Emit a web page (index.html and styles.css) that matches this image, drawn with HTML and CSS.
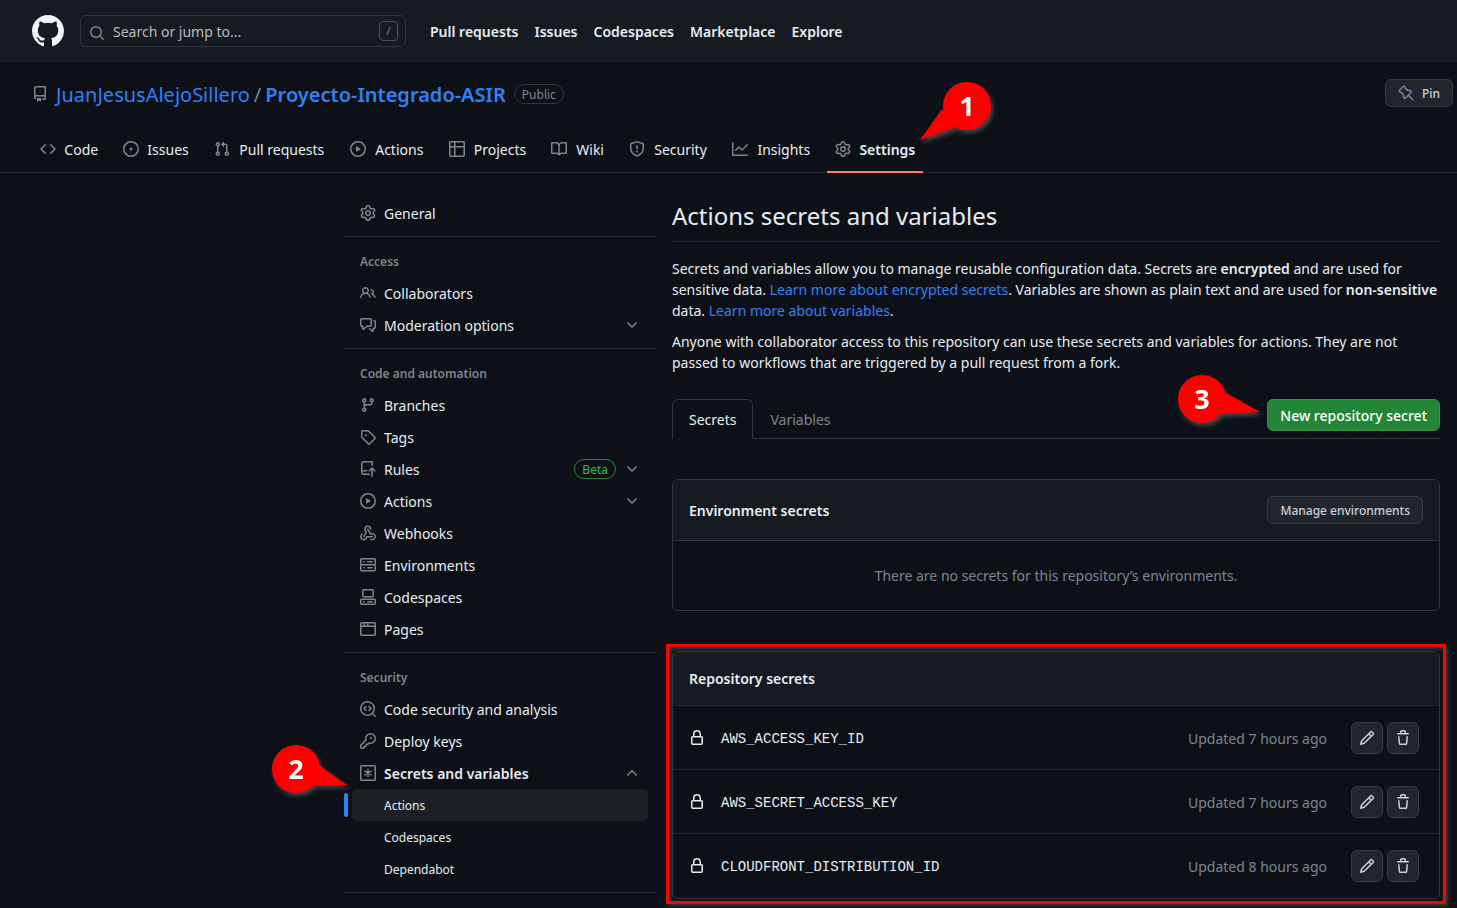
FILE: index.html
```html
<!DOCTYPE html>
<html lang="en">
<head>
<meta charset="utf-8">
<meta name="viewport" content="width=device-width, initial-scale=1">
<title>Actions secrets and variables</title>
<link rel="stylesheet" href="styles.css">
</head>
<body>
<svg class="sprite" aria-hidden="true">
  <symbol id="mark" viewBox="0 0 16 16"><path d="M8 0c4.42 0 8 3.58 8 8a8.013 8.013 0 0 1-5.45 7.59c-.4.08-.55-.17-.55-.38 0-.27.01-1.13.01-2.2 0-.75-.25-1.23-.54-1.48 1.78-.2 3.65-.88 3.65-3.95 0-.88-.31-1.59-.82-2.15.08-.2.36-1.02-.08-2.12 0 0-.67-.22-2.2.82-.64-.18-1.32-.27-2-.27-.68 0-1.36.09-2 .27-1.53-1.03-2.2-.82-2.2-.82-.44 1.1-.16 1.92-.08 2.12-.51.56-.82 1.28-.82 2.15 0 3.06 1.86 3.75 3.64 3.95-.23.2-.44.55-.51 1.07-.46.21-1.61.55-2.33-.66-.15-.24-.6-.83-1.23-.82-.67.01-.27.38.01.53.34.19.73.9.82 1.13.16.45.68 1.31 2.69.94 0 .67.01 1.3.01 1.49 0 .21-.15.45-.55.38A7.995 7.995 0 0 1 0 8c0-4.42 3.58-8 8-8Z"/></symbol>
  <symbol id="search" viewBox="0 0 16 16"><path d="M10.68 11.74a6 6 0 0 1-7.922-8.982 6 6 0 0 1 8.982 7.922l3.04 3.04a.749.749 0 0 1-.326 1.275.749.749 0 0 1-.734-.215ZM11.5 7a4.499 4.499 0 1 0-8.997 0A4.499 4.499 0 0 0 11.5 7Z"/></symbol>
  <symbol id="repo" viewBox="0 0 16 16"><path d="M2 2.5A2.5 2.5 0 0 1 4.5 0h8.75a.75.75 0 0 1 .75.75v12.5a.75.75 0 0 1-.75.75h-2.5a.75.75 0 0 1 0-1.5h1.75v-2h-8a1 1 0 0 0-.714 1.7.75.75 0 1 1-1.072 1.05A2.495 2.495 0 0 1 2 11.5Zm10.5-1h-8a1 1 0 0 0-1 1v6.708A2.486 2.486 0 0 1 4.5 9h8ZM5 12.25a.25.25 0 0 1 .25-.25h3.5a.25.25 0 0 1 .25.25v3.25a.25.25 0 0 1-.4.2l-1.45-1.087a.249.249 0 0 0-.3 0L5.4 15.7a.25.25 0 0 1-.4-.2Z"/></symbol>
  <symbol id="pin" viewBox="0 0 16 16"><path d="m11.294.984 3.722 3.722a1.75 1.75 0 0 1-.504 2.826l-1.327.613a3.089 3.089 0 0 0-1.707 2.084l-.584 2.454c-.317 1.332-1.972 1.8-2.94.832L5.75 11.311 1.78 15.28a.749.749 0 1 1-1.06-1.06l3.969-3.97-2.204-2.204c-.968-.968-.5-2.623.832-2.94l2.454-.584a3.08 3.08 0 0 0 2.084-1.707l.613-1.327a1.75 1.75 0 0 1 2.826-.504ZM6.283 9.723l2.732 2.731a.25.25 0 0 0 .42-.119l.584-2.454a4.586 4.586 0 0 1 2.537-3.098l1.328-.613a.25.25 0 0 0 .072-.404l-3.722-3.722a.25.25 0 0 0-.404.072l-.613 1.328a4.584 4.584 0 0 1-3.098 2.537l-2.454.584a.25.25 0 0 0-.119.42l2.731 2.732Z" transform="matrix(-1 0 0 1 16 0)"/></symbol>
  <symbol id="code" viewBox="0 0 16 16"><path d="m11.28 3.22 4.25 4.25a.75.75 0 0 1 0 1.06l-4.25 4.25a.749.749 0 0 1-1.275-.326.749.749 0 0 1 .215-.734L13.94 8l-3.72-3.72a.749.749 0 0 1 .326-1.275.749.749 0 0 1 .734.215Zm-6.56 0a.751.751 0 0 1 1.042.018.751.751 0 0 1 .018 1.042L2.06 8l3.72 3.72a.749.749 0 0 1-.326 1.275.749.749 0 0 1-.734-.215L.47 8.53a.75.75 0 0 1 0-1.06Z"/></symbol>
  <symbol id="issue" viewBox="0 0 16 16"><path d="M8 9.5a1.5 1.5 0 1 0 0-3 1.5 1.5 0 0 0 0 3Z"/><path d="M8 0a8 8 0 1 1 0 16A8 8 0 0 1 8 0ZM1.5 8a6.5 6.5 0 1 0 13 0 6.5 6.5 0 0 0-13 0Z"/></symbol>
  <symbol id="pull" viewBox="0 0 16 16"><path d="M1.5 3.25a2.25 2.25 0 1 1 3 2.122v5.256a2.251 2.251 0 1 1-1.5 0V5.372A2.25 2.25 0 0 1 1.5 3.25Zm5.677-.177L9.573.677A.25.25 0 0 1 10 .854V2.5h1A2.5 2.5 0 0 1 13.5 5v5.628a2.251 2.251 0 1 1-1.5 0V5a1 1 0 0 0-1-1h-1v1.646a.25.25 0 0 1-.427.177L7.177 3.427a.25.25 0 0 1 0-.354ZM3.75 2.5a.75.75 0 1 0 0 1.5.75.75 0 0 0 0-1.5Zm0 9.5a.75.75 0 1 0 0 1.5.75.75 0 0 0 0-1.5Zm8.25.75a.75.75 0 1 0 1.5 0 .75.75 0 0 0-1.5 0Z"/></symbol>
  <symbol id="play" viewBox="0 0 16 16"><path d="M8 0a8 8 0 1 1 0 16A8 8 0 0 1 8 0ZM1.5 8a6.5 6.5 0 1 0 13 0 6.5 6.5 0 0 0-13 0Zm4.879-2.773 4.264 2.559a.25.25 0 0 1 0 .428l-4.264 2.559A.25.25 0 0 1 6 10.559V5.442a.25.25 0 0 1 .379-.215Z"/></symbol>
  <symbol id="table" viewBox="0 0 16 16"><path d="M0 1.75C0 .784.784 0 1.75 0h12.5C15.216 0 16 .784 16 1.75v12.5A1.75 1.75 0 0 1 14.25 16H1.75A1.75 1.75 0 0 1 0 14.25ZM6.5 6.5v8h7.75a.25.25 0 0 0 .25-.25V6.5Zm8-1.5V1.75a.25.25 0 0 0-.25-.25H6.5V5Zm-13 1.5v7.75c0 .138.112.25.25.25H5v-8ZM5 5V1.5H1.75a.25.25 0 0 0-.25.25V5Z"/></symbol>
  <symbol id="book" viewBox="0 0 16 16"><path d="M0 1.75A.75.75 0 0 1 .75 1h4.253c1.227 0 2.317.59 3 1.501A3.743 3.743 0 0 1 11.006 1h4.245a.75.75 0 0 1 .75.75v10.5a.75.75 0 0 1-.75.75h-4.507a2.25 2.25 0 0 0-1.591.659l-.622.621a.75.75 0 0 1-1.06 0l-.622-.621A2.25 2.25 0 0 0 5.258 13H.75a.75.75 0 0 1-.75-.75Zm7.251 10.324.004-5.073-.002-2.253A2.25 2.25 0 0 0 5.003 2.5H1.5v9h3.757a3.75 3.75 0 0 1 1.994.574ZM8.755 4.75l-.004 7.322a3.752 3.752 0 0 1 1.992-.572H14.5v-9h-3.495a2.25 2.25 0 0 0-2.25 2.25Z"/></symbol>
  <symbol id="shield" viewBox="0 0 16 16"><path d="M7.467.133a1.748 1.748 0 0 1 1.066 0l5.25 1.68A1.75 1.75 0 0 1 15 3.48V7c0 1.566-.32 3.182-1.303 4.682-.983 1.498-2.585 2.813-5.032 3.855a1.697 1.697 0 0 1-1.33 0c-2.447-1.042-4.049-2.357-5.032-3.855C1.32 10.182 1 8.566 1 7V3.48a1.75 1.75 0 0 1 1.217-1.667Zm.61 1.429a.25.25 0 0 0-.153 0l-5.25 1.68a.25.25 0 0 0-.174.238V7c0 1.358.275 2.666 1.057 3.86.784 1.194 2.121 2.34 4.366 3.297a.196.196 0 0 0 .154 0c2.245-.956 3.582-2.104 4.366-3.298C13.225 9.666 13.5 8.36 13.5 7V3.48a.251.251 0 0 0-.174-.237ZM8.75 4.75v3a.75.75 0 0 1-1.5 0v-3a.75.75 0 0 1 1.5 0ZM9 10.5a1 1 0 1 1-2 0 1 1 0 0 1 2 0Z"/></symbol>
  <symbol id="graph" viewBox="0 0 16 16"><path d="M1.5 1.75V13.5h13.75a.75.75 0 0 1 0 1.5H.75a.75.75 0 0 1-.75-.75V1.75a.75.75 0 0 1 1.5 0Zm14.28 2.53-5.25 5.25a.75.75 0 0 1-1.06 0L7 7.06 4.28 9.78a.751.751 0 0 1-1.042-.018.751.751 0 0 1-.018-1.042l3.25-3.25a.75.75 0 0 1 1.06 0L10 7.94l4.72-4.72a.751.751 0 0 1 1.042.018.751.751 0 0 1 .018 1.042Z"/></symbol>
  <symbol id="gear" viewBox="0 0 16 16"><path d="M8 0a8.2 8.2 0 0 1 .701.031C9.444.095 9.99.645 10.16 1.29l.288 1.107c.018.066.079.158.212.224.231.114.454.243.668.386.123.082.233.09.299.071l1.103-.303c.644-.176 1.392.021 1.82.63.27.385.506.792.704 1.218.315.675.111 1.422-.364 1.891l-.814.806c-.049.048-.098.147-.088.294.016.257.016.515 0 .772-.01.147.038.246.088.294l.814.806c.475.469.679 1.216.364 1.891a7.977 7.977 0 0 1-.704 1.217c-.428.61-1.176.807-1.82.63l-1.102-.302c-.067-.019-.177-.011-.3.071a5.909 5.909 0 0 1-.668.386c-.133.066-.194.158-.211.224l-.29 1.106c-.168.646-.715 1.196-1.458 1.26a8.006 8.006 0 0 1-1.402 0c-.743-.064-1.289-.614-1.458-1.26l-.289-1.106c-.018-.066-.079-.158-.212-.224a5.738 5.738 0 0 1-.668-.386c-.123-.082-.233-.09-.299-.071l-1.103.303c-.644.176-1.392-.021-1.82-.63a8.12 8.12 0 0 1-.704-1.218c-.315-.675-.111-1.422.363-1.891l.815-.806c.05-.048.098-.147.088-.294a6.214 6.214 0 0 1 0-.772c.01-.147-.038-.246-.088-.294l-.815-.806C.635 6.045.431 5.298.746 4.623a7.92 7.92 0 0 1 .704-1.217c.428-.61 1.176-.807 1.82-.63l1.102.302c.067.019.177.011.3-.071.214-.143.437-.272.668-.386.133-.066.194-.158.211-.224l.29-1.106C6.009.645 6.556.095 7.299.03 7.53.01 7.764 0 8 0Zm-.571 1.525c-.036.003-.108.036-.137.146l-.289 1.105c-.147.561-.549.967-.998 1.189-.173.086-.34.183-.5.29-.417.278-.97.423-1.529.27l-1.103-.303c-.109-.03-.175.016-.195.045-.22.312-.412.644-.573.99-.014.031-.021.11.059.19l.815.806c.411.406.562.957.53 1.456a4.709 4.709 0 0 0 0 .582c.032.499-.119 1.05-.53 1.456l-.815.806c-.081.08-.073.159-.059.19.162.346.353.677.573.989.02.03.085.076.195.046l1.102-.303c.56-.153 1.113-.008 1.53.27.161.107.328.204.501.29.447.222.85.629.997 1.189l.289 1.105c.029.109.101.143.137.146a6.6 6.6 0 0 0 1.142 0c.036-.003.108-.036.137-.146l.289-1.105c.147-.561.549-.967.998-1.189.173-.086.34-.183.5-.29.417-.278.97-.423 1.529-.27l1.103.303c.109.029.175-.016.195-.045.22-.313.411-.644.573-.99.014-.031.021-.11-.059-.19l-.815-.806c-.411-.406-.562-.957-.53-1.456a4.709 4.709 0 0 0 0-.582c-.032-.499.119-1.05.53-1.456l.815-.806c.081-.08.073-.159.059-.19a6.464 6.464 0 0 0-.573-.989c-.02-.03-.085-.076-.195-.046l-1.102.303c-.56.153-1.113.008-1.53-.27a4.44 4.44 0 0 0-.501-.29c-.447-.222-.85-.629-.997-1.189l-.289-1.105c-.029-.11-.101-.143-.137-.146a6.6 6.6 0 0 0-1.142 0ZM11 8a3 3 0 1 1-6 0 3 3 0 0 1 6 0ZM9.5 8a1.5 1.5 0 1 0-3.001.001A1.5 1.5 0 0 0 9.5 8Z"/></symbol>
  <symbol id="people" viewBox="0 0 16 16"><path d="M2 5.5a3.5 3.5 0 1 1 5.898 2.549 5.508 5.508 0 0 1 3.034 4.084.75.75 0 1 1-1.482.235 4 4 0 0 0-7.9 0 .75.75 0 0 1-1.482-.236A5.507 5.507 0 0 1 3.102 8.05 3.493 3.493 0 0 1 2 5.5ZM11 4a3.001 3.001 0 0 1 2.22 5.018 5.01 5.01 0 0 1 2.56 3.012.749.749 0 0 1-.885.954.752.752 0 0 1-.549-.514 3.507 3.507 0 0 0-2.522-2.372.75.75 0 0 1-.574-.73v-.352a.75.75 0 0 1 .416-.672A1.5 1.5 0 0 0 11 5.5.75.75 0 0 1 11 4Zm-5.5-.5a2 2 0 1 0-.001 3.999A2 2 0 0 0 5.5 3.5Z"/></symbol>
  <symbol id="comments" viewBox="0 0 16 16"><path d="M1.75 1h8.5c.966 0 1.75.784 1.75 1.75v5.5A1.75 1.75 0 0 1 10.25 10H7.061l-2.574 2.573A1.458 1.458 0 0 1 2 11.543V10h-.25A1.75 1.75 0 0 1 0 8.25v-5.5C0 1.784.784 1 1.75 1ZM1.5 2.75v5.5c0 .138.112.25.25.25h1a.75.75 0 0 1 .75.75v2.19l2.72-2.72a.749.749 0 0 1 .53-.22h3.5a.25.25 0 0 0 .25-.25v-5.5a.25.25 0 0 0-.25-.25h-8.5a.25.25 0 0 0-.25.25Zm13 2a.25.25 0 0 0-.25-.25h-.5a.75.75 0 0 1 0-1.5h.5c.966 0 1.75.784 1.75 1.75v5.5A1.75 1.75 0 0 1 14.25 12H14v1.543a1.458 1.458 0 0 1-2.487 1.03L9.22 12.28a.749.749 0 0 1 .326-1.275.749.749 0 0 1 .734.215l2.22 2.22v-2.19a.75.75 0 0 1 .75-.75h1a.25.25 0 0 0 .25-.25Z"/></symbol>
  <symbol id="down" viewBox="0 0 16 16"><path d="M12.78 5.22a.749.749 0 0 1 0 1.06l-4.25 4.25a.749.749 0 0 1-1.06 0L3.22 6.28a.749.749 0 1 1 1.06-1.06L8 8.939l3.72-3.719a.749.749 0 0 1 1.06 0Z"/></symbol>
  <symbol id="up" viewBox="0 0 16 16"><path d="M3.22 10.53a.749.749 0 0 1 0-1.06l4.25-4.25a.749.749 0 0 1 1.06 0l4.25 4.25a.749.749 0 1 1-1.06 1.06L8 6.811 4.28 10.53a.749.749 0 0 1-1.06 0Z"/></symbol>
  <symbol id="branch" viewBox="0 0 16 16"><path d="M9.5 3.25a2.25 2.25 0 1 1 3 2.122V6A2.5 2.5 0 0 1 10 8.5H6a1 1 0 0 0-1 1v1.128a2.251 2.251 0 1 1-1.5 0V5.372a2.25 2.25 0 1 1 1.5 0v1.836A2.493 2.493 0 0 1 6 7h4a1 1 0 0 0 1-1v-.628A2.25 2.25 0 0 1 9.5 3.25Zm-6 0a.75.75 0 1 0 1.5 0 .75.75 0 0 0-1.5 0Zm8.25-.75a.75.75 0 1 0 0 1.5.75.75 0 0 0 0-1.5ZM4.25 12a.75.75 0 1 0 0 1.5.75.75 0 0 0 0-1.5Z"/></symbol>
  <symbol id="tag" viewBox="0 0 16 16"><path d="M1 7.775V2.75C1 1.784 1.784 1 2.75 1h5.025c.464 0 .91.184 1.238.513l6.25 6.25a1.75 1.75 0 0 1 0 2.474l-5.026 5.026a1.75 1.75 0 0 1-2.474 0l-6.25-6.25A1.752 1.752 0 0 1 1 7.775Zm1.5 0c0 .066.026.13.073.177l6.25 6.25a.25.25 0 0 0 .354 0l5.025-5.025a.25.25 0 0 0 0-.354l-6.25-6.25a.25.25 0 0 0-.177-.073H2.75a.25.25 0 0 0-.25.25ZM6 5a1 1 0 1 1 0 2 1 1 0 0 1 0-2Z"/></symbol>
  <symbol id="push" viewBox="0 0 16 16"><path d="M1 2.5A2.5 2.5 0 0 1 3.5 0h8.75a.75.75 0 0 1 .75.75v3.5a.75.75 0 0 1-1.5 0V1.5h-8a1 1 0 0 0-1 1v6.708A2.493 2.493 0 0 1 3.5 9h3.25a.75.75 0 0 1 0 1.5H3.5a1 1 0 0 0 0 2h5.75a.75.75 0 0 1 0 1.5H3.5A2.5 2.5 0 0 1 1 11.5Zm13.23 7.79-1.48-1.5v6.46a.75.75 0 0 1-1.5 0V8.79l-1.48 1.5a.749.749 0 0 1-1.07-1.05l2.77-2.81a.75.75 0 0 1 1.06 0l2.77 2.81a.75.75 0 0 1-1.07 1.05Z"/></symbol>
  <symbol id="webhook" viewBox="0 0 16 16"><path d="M5.5 4.25a2.25 2.25 0 0 1 4.5 0 .75.75 0 0 0 1.5 0 3.75 3.75 0 1 0-6.14 2.889l-2.272 4.258a.75.75 0 0 0 1.324.706L7 7.25a.75.75 0 0 0-.309-1.015A2.25 2.25 0 0 1 5.5 4.25Z"/><path d="M7.364 3.607a.75.75 0 0 1 1.03.257l2.608 4.349a3.75 3.75 0 1 1-.628 6.785.75.75 0 0 1 .752-1.299 2.25 2.25 0 1 0-.033-3.88.75.75 0 0 1-1.03-.256L7.107 4.636a.75.75 0 0 1 .257-1.03Z"/><path d="M2.9 8.776A.75.75 0 0 1 2.625 9.8 2.25 2.25 0 1 0 6 11.75a.75.75 0 0 1 .75-.751h5.5a.75.75 0 0 1 0 1.5H7.425a3.751 3.751 0 1 1-5.55-3.998.75.75 0 0 1 1.024.274Z"/></symbol>
  <symbol id="server" viewBox="0 0 16 16"><path d="M1.75 1h12.5c.966 0 1.75.784 1.75 1.75v4c0 .372-.116.717-.314 1 .198.283.314.628.314 1v4a1.75 1.75 0 0 1-1.75 1.75H1.75A1.75 1.75 0 0 1 0 12.75v-4c0-.358.109-.707.314-1a1.739 1.739 0 0 1-.314-1v-4C0 1.784.784 1 1.75 1ZM1.5 2.75v4c0 .138.112.25.25.25h12.5a.25.25 0 0 0 .25-.25v-4a.25.25 0 0 0-.25-.25H1.75a.25.25 0 0 0-.25.25Zm.25 5.75a.25.25 0 0 0-.25.25v4c0 .138.112.25.25.25h12.5a.25.25 0 0 0 .25-.25v-4a.25.25 0 0 0-.25-.25ZM7 4.75A.75.75 0 0 1 7.75 4h4.5a.75.75 0 0 1 0 1.5h-4.5A.75.75 0 0 1 7 4.75ZM7.75 10h4.5a.75.75 0 0 1 0 1.5h-4.5a.75.75 0 0 1 0-1.5ZM3 4.75A.75.75 0 0 1 3.75 4h.5a.75.75 0 0 1 0 1.5h-.5A.75.75 0 0 1 3 4.75ZM3.75 10h.5a.75.75 0 0 1 0 1.5h-.5a.75.75 0 0 1 0-1.5Z"/></symbol>
  <symbol id="codespaces" viewBox="0 0 16 16"><path d="M0 11.25c0-.966.784-1.75 1.75-1.75h12.5c.966 0 1.75.784 1.75 1.75v3A1.75 1.75 0 0 1 14.25 16H1.75A1.75 1.75 0 0 1 0 14.25Zm2-9.5C2 .784 2.784 0 3.75 0h8.5C13.216 0 14 .784 14 1.75v5a1.75 1.75 0 0 1-1.75 1.75h-8.5A1.75 1.75 0 0 1 2 6.75Zm1.75-.25a.25.25 0 0 0-.25.25v5c0 .138.112.25.25.25h8.5a.25.25 0 0 0 .25-.25v-5a.25.25 0 0 0-.25-.25Zm-2 9.5a.25.25 0 0 0-.25.25v3c0 .138.112.25.25.25h12.5a.25.25 0 0 0 .25-.25v-3a.25.25 0 0 0-.25-.25Z"/><path d="M7 12.75a.75.75 0 0 1 .75-.75h4.5a.75.75 0 0 1 0 1.5h-4.5a.75.75 0 0 1-.75-.75Zm-4 0a.75.75 0 0 1 .75-.75h.5a.75.75 0 0 1 0 1.5h-.5a.75.75 0 0 1-.75-.75Z"/></symbol>
  <symbol id="browser" viewBox="0 0 16 16"><path d="M0 2.75C0 1.784.784 1 1.75 1h12.5c.966 0 1.75.784 1.75 1.75v10.5A1.75 1.75 0 0 1 14.25 15H1.75A1.75 1.75 0 0 1 0 13.25ZM14.5 6h-13v7.25c0 .138.112.25.25.25h12.5a.25.25 0 0 0 .25-.25Zm-6-3.5v2h6V2.75a.25.25 0 0 0-.25-.25ZM5 2.5v2h2v-2Zm-3.25 0a.25.25 0 0 0-.25.25V4.5h2v-2Z"/></symbol>
  <symbol id="codescan" viewBox="0 0 16 16"><path d="M8.47 4.97a.75.75 0 0 0 0 1.06L9.94 7.5 8.47 8.97a.75.75 0 1 0 1.06 1.06l2-2a.75.75 0 0 0 0-1.06l-2-2a.75.75 0 0 0-1.06 0ZM6.53 6.03a.75.75 0 0 0-1.06-1.06l-2 2a.75.75 0 0 0 0 1.06l2 2a.75.75 0 1 0 1.06-1.06L5.06 7.5Z"/><path d="M12.246 13.307a7.501 7.501 0 1 1 1.06-1.06l2.474 2.473a.749.749 0 0 1-1.06 1.06ZM1.5 7.5a6.002 6.002 0 0 0 3.608 5.504 6.002 6.002 0 0 0 6.486-1.117.748.748 0 0 1 .292-.293A6 6 0 1 0 1.5 7.5Z"/></symbol>
  <symbol id="key" viewBox="0 0 16 16"><path d="M10.5 0a5.499 5.499 0 1 1-1.288 10.848l-.932.932a.749.749 0 0 1-.53.22H7v.75a.749.749 0 0 1-.22.53l-.5.5a.749.749 0 0 1-.53.22H5v.75a.749.749 0 0 1-.22.53l-.5.5a.749.749 0 0 1-.53.22h-2A1.75 1.75 0 0 1 0 14.25v-2c0-.199.079-.389.22-.53l4.932-4.932A5.5 5.5 0 0 1 10.5 0Zm-4 5.5c-.001.431.069.86.205 1.269a.75.75 0 0 1-.181.768L1.5 12.56v1.69c0 .138.112.25.25.25h1.69l.06-.06v-1.19a.75.75 0 0 1 .75-.75h1.19l.06-.06v-1.19a.75.75 0 0 1 .75-.75h1.19l1.023-1.025a.75.75 0 0 1 .768-.18A4 4 0 1 0 6.5 5.5ZM11 6a1 1 0 1 1 0-2 1 1 0 0 1 0 2Z"/></symbol>
  <symbol id="asterisk" viewBox="0 0 16 16"><rect x=".75" y=".75" width="14.5" height="14.5" rx="1" fill="none" stroke="currentColor" stroke-width="1.5"/><path d="M8 4.5v7M5 6.25l6 3.5M11 6.25l-6 3.5" fill="none" stroke="currentColor" stroke-width="1.5" stroke-linecap="round"/></symbol>
  <symbol id="lock" viewBox="0 0 16 16"><path d="M4 4a4 4 0 0 1 8 0v2h.25c.966 0 1.75.784 1.75 1.75v5.5A1.75 1.75 0 0 1 12.25 15h-8.5A1.75 1.75 0 0 1 2 13.25v-5.5C2 6.784 2.784 6 3.75 6H4Zm8.25 3.5h-8.5a.25.25 0 0 0-.25.25v5.5c0 .138.112.25.25.25h8.5a.25.25 0 0 0 .25-.25v-5.5a.25.25 0 0 0-.25-.25ZM10.5 6V4a2.5 2.5 0 1 0-5 0v2Z"/></symbol>
  <symbol id="pencil" viewBox="0 0 16 16"><path d="M11.013 1.427a1.75 1.75 0 0 1 2.474 0l1.086 1.086a1.75 1.75 0 0 1 0 2.474l-8.61 8.61c-.21.21-.47.364-.756.445l-3.251.93a.75.75 0 0 1-.927-.928l.929-3.25c.081-.286.235-.547.445-.758l8.61-8.61Zm.176 4.823L9.75 4.81l-6.286 6.287a.253.253 0 0 0-.064.108l-.558 1.953 1.953-.558a.253.253 0 0 0 .108-.064Zm1.238-3.763a.25.25 0 0 0-.354 0L10.811 3.75l1.439 1.44 1.263-1.263a.25.25 0 0 0 0-.354Z"/></symbol>
  <symbol id="trash" viewBox="0 0 16 16"><path d="M11 1.75V3h2.25a.75.75 0 0 1 0 1.5H2.75a.75.75 0 0 1 0-1.5H5V1.75C5 .784 5.784 0 6.75 0h2.5C10.216 0 11 .784 11 1.75ZM4.496 6.675l.66 6.6a.25.25 0 0 0 .249.225h5.19a.25.25 0 0 0 .249-.225l.66-6.6a.75.75 0 0 1 1.492.149l-.66 6.6A1.748 1.748 0 0 1 10.595 15h-5.19a1.75 1.75 0 0 1-1.741-1.575l-.66-6.6a.75.75 0 1 1 1.492-.15ZM6.5 1.75V3h3V1.75a.25.25 0 0 0-.25-.25h-2.5a.25.25 0 0 0-.25.25Z"/></symbol>
</svg>

<header class="topbar">
  <a class="logo" href="#" aria-label="Homepage"><svg><use href="#mark"/></svg></a>
  <label class="search">
    <svg class="icon"><use href="#search"/></svg>
    <input type="text" placeholder="Search or jump to..." aria-label="Search or jump to">
    <kbd>/</kbd>
  </label>
  <nav class="toplinks" aria-label="Global">
    <a href="#">Pull requests</a><a href="#">Issues</a><a href="#">Codespaces</a><a href="#">Marketplace</a><a href="#">Explore</a>
  </nav>
</header>

<div class="repohead">
  <div class="titlerow">
    <svg class="icon muted"><use href="#repo"/></svg>
    <h1><a href="#">JuanJesusAlejoSillero</a><span class="slash">/</span><a class="name" href="#">Proyecto-Integrado-ASIR</a></h1>
    <span class="label">Public</span>
    <button class="btn small pin" type="button"><svg class="icon muted"><use href="#pin"/></svg>Pin</button>
  </div>
  <nav class="tabs" aria-label="Repository">
    <a href="#"><svg class="icon"><use href="#code"/></svg><span data-text="Code">Code</span></a>
    <a href="#"><svg class="icon"><use href="#issue"/></svg><span data-text="Issues">Issues</span></a>
    <a href="#"><svg class="icon"><use href="#pull"/></svg><span data-text="Pull requests">Pull requests</span></a>
    <a href="#"><svg class="icon"><use href="#play"/></svg><span data-text="Actions">Actions</span></a>
    <a href="#"><svg class="icon"><use href="#table"/></svg><span data-text="Projects">Projects</span></a>
    <a href="#"><svg class="icon"><use href="#book"/></svg><span data-text="Wiki">Wiki</span></a>
    <a href="#"><svg class="icon"><use href="#shield"/></svg><span data-text="Security">Security</span></a>
    <a href="#"><svg class="icon"><use href="#graph"/></svg><span data-text="Insights">Insights</span></a>
    <a class="current" href="#" aria-current="page"><svg class="icon"><use href="#gear"/></svg><span data-text="Settings">Settings</span>
      <svg class="callout one" viewBox="0 0 80 68"><path d="M4 62 L26 31 L38 50 Z"/><circle cx="51" cy="28" r="24"/><text x="51" y="38">1</text></svg></a>
  </nav>
</div>

<div class="layout">
  <nav class="sidebar" aria-label="Settings">
    <ul>
      <li><a href="#"><svg class="icon"><use href="#gear"/></svg>General</a></li>
    </ul>
    <section>
      <h2>Access</h2>
      <ul>
        <li><a href="#"><svg class="icon"><use href="#people"/></svg>Collaborators</a></li>
        <li><button type="button"><svg class="icon"><use href="#comments"/></svg><span class="grow">Moderation options</span><svg class="icon"><use href="#down"/></svg></button></li>
      </ul>
    </section>
    <section>
      <h2>Code and automation</h2>
      <ul>
        <li><a href="#"><svg class="icon"><use href="#branch"/></svg>Branches</a></li>
        <li><a href="#"><svg class="icon"><use href="#tag"/></svg>Tags</a></li>
        <li><button type="button"><svg class="icon"><use href="#push"/></svg><span class="grow">Rules</span><span class="label beta">Beta</span><svg class="icon"><use href="#down"/></svg></button></li>
        <li><button type="button"><svg class="icon"><use href="#play"/></svg><span class="grow">Actions</span><svg class="icon"><use href="#down"/></svg></button></li>
        <li><a href="#"><svg class="icon"><use href="#webhook"/></svg>Webhooks</a></li>
        <li><a href="#"><svg class="icon"><use href="#server"/></svg>Environments</a></li>
        <li><a href="#"><svg class="icon"><use href="#codespaces"/></svg>Codespaces</a></li>
        <li><a href="#"><svg class="icon"><use href="#browser"/></svg>Pages</a></li>
      </ul>
    </section>
    <section class="last">
      <h2>Security</h2>
      <ul>
        <li><a href="#"><svg class="icon"><use href="#codescan"/></svg>Code security and analysis</a></li>
        <li><a href="#"><svg class="icon"><use href="#key"/></svg>Deploy keys</a></li>
        <li class="open"><button type="button" aria-expanded="true"><svg class="icon"><use href="#asterisk"/></svg><span class="grow">Secrets and variables</span><svg class="icon"><use href="#up"/></svg></button>
          <svg class="callout two" viewBox="0 0 88 64"><path d="M79 44 L52 25 L45 44 Z"/><circle cx="28" cy="28" r="24"/><text x="28" y="38">2</text></svg>
          <ul class="sub">
            <li class="selected"><a href="#" aria-current="page">Actions</a></li>
            <li><a href="#">Codespaces</a></li>
            <li><a href="#">Dependabot</a></li>
          </ul>
        </li>
      </ul>
    </section>
  </nav>

  <main>
    <h2 class="heading">Actions secrets and variables</h2>
    <p>Secrets and variables allow you to manage reusable configuration data. Secrets are <strong>encrypted</strong> and are used for sensitive data. <a href="#">Learn more about encrypted secrets</a>. Variables are shown as plain text and are used for <strong>non-sensitive</strong> data. <a href="#">Learn more about variables</a>.</p>
    <p>Anyone with collaborator access to this repository can use these secrets and variables for actions. They are not passed to workflows that are triggered by a pull request from a fork.</p>

    <div class="tabnav">
      <a class="tab on" href="#" aria-current="page">Secrets</a>
      <a class="tab" href="#">Variables</a>
      <div class="action">
        <button class="btn primary" type="button">New repository secret</button>
        <svg class="callout three" viewBox="0 0 96 64"><path d="M86 41 L50 21 L45 43 Z"/><circle cx="28" cy="28" r="24"/><text x="28" y="38">3</text></svg>
      </div>
    </div>

    <section class="box">
      <div class="boxhead tall"><h3>Environment secrets</h3><button class="btn small" type="button">Manage environments</button></div>
      <div class="blank">There are no secrets for this repository’s environments.</div>
    </section>

    <section class="box marked">
      <div class="boxhead"><h3>Repository secrets</h3></div>
      <ul class="secrets">
        <li><svg class="icon"><use href="#lock"/></svg><code>AWS_ACCESS_KEY_ID</code><span class="when">Updated 7 hours ago</span>
          <button class="btn square" type="button" aria-label="Edit"><svg class="icon"><use href="#pencil"/></svg></button><button class="btn square" type="button" aria-label="Delete"><svg class="icon"><use href="#trash"/></svg></button></li>
        <li><svg class="icon"><use href="#lock"/></svg><code>AWS_SECRET_ACCESS_KEY</code><span class="when">Updated 7 hours ago</span>
          <button class="btn square" type="button" aria-label="Edit"><svg class="icon"><use href="#pencil"/></svg></button><button class="btn square" type="button" aria-label="Delete"><svg class="icon"><use href="#trash"/></svg></button></li>
        <li><svg class="icon"><use href="#lock"/></svg><code>CLOUDFRONT_DISTRIBUTION_ID</code><span class="when">Updated 8 hours ago</span>
          <button class="btn square" type="button" aria-label="Edit"><svg class="icon"><use href="#pencil"/></svg></button><button class="btn square" type="button" aria-label="Delete"><svg class="icon"><use href="#trash"/></svg></button></li>
      </ul>
    </section>
  </main>
</div>
</body>
</html>
```
FILE: styles.css
```css
:root {
  --bg: #0d1117;
  --subtle: #161b22;
  --fg: #e6edf3;
  --muted: #7d8590;
  --border: #30363d;
  --border-muted: #21262d;
  --link: #2f81f7;
}

* { box-sizing: border-box; }

body {
  margin: 0;
  background: var(--bg);
  color: var(--fg);
  font: 14px/21px "Noto Sans", sans-serif;
}

a { color: inherit; text-decoration: none; }
ul { margin: 0; padding: 0; list-style: none; }
button, input { font: inherit; color: inherit; }
button { cursor: pointer; }
h1, h2, h3, p { margin: 0; }
strong { font-weight: 600; }

.sprite { display: none; }
.icon { width: 16px; height: 16px; flex: none; fill: currentColor; }
.muted { color: var(--muted); }

/* Global bar */
.topbar {
  display: flex;
  align-items: center;
  padding: 15px 32px 16px;
  background: var(--subtle);
}
.logo { color: #f0f6fc; margin-right: 16px; }
.logo svg { display: block; width: 32px; height: 32px; fill: currentColor; }
.search {
  display: flex;
  align-items: center;
  gap: 8px;
  flex: 0 1 326px;
  height: 32px;
  padding: 0 7px 0 8px;
  border: 1px solid var(--border);
  border-radius: 6px;
  color: var(--muted);
}
.search .icon { margin-top: 4px; }
.search input {
  flex: 1;
  min-width: 0;
  padding: 0;
  border: 0;
  outline: 0;
  background: none;
  color: var(--fg);
}
.search input::placeholder { color: #b9bcbf; opacity: 1; }
.search kbd {
  width: 19px;
  height: 20px;
  border: 1px solid #484f58;
  border-radius: 4px;
  font: 11px/18px "Noto Sans", sans-serif;
  text-align: center;
}
.toplinks { display: flex; gap: 16px; margin-left: 24px; font-weight: 600; }

/* Repository header */
.repohead { padding-top: 16px; border-bottom: 1px solid var(--border-muted); }
.titlerow { display: flex; align-items: center; padding: 0 4px 0 32px; min-height: 30px; }
.titlerow h1 { margin: 0 8px; padding-top: 2px; font-size: 20px; line-height: 28px; font-weight: 400; color: var(--link); }
.titlerow .slash { margin: 0 4px; color: var(--muted); }
.titlerow .name { font-weight: 600; }
.label {
  height: 20px;
  padding: 0 7px;
  border: 1px solid var(--border);
  border-radius: 20px;
  font-size: 12px;
  line-height: 19px;
  color: var(--muted);
}
.label.beta { border-color: #238636; color: #3fb950; }
.pin { align-self: flex-start; margin-left: auto; }

.tabs { display: flex; gap: 8px; padding: 16px 32px 0; }
.tabs a {
  position: relative;
  display: flex;
  align-items: center;
  gap: 8px;
  height: 48px;
  padding: 2px 8px 0;
  margin-bottom: -1px;
  border-bottom: 2px solid transparent;
}
.tabs span { text-align: center; }
/* Reserves the bold width, so a tab keeps its size when selected */
.tabs span::before {
  content: attr(data-text);
  display: block;
  height: 0;
  visibility: hidden;
  font-weight: 600;
}
.tabs .icon { color: var(--muted); }
.tabs .current { font-weight: 600; border-color: #f78166; }

/* Buttons */
.btn {
  display: inline-flex;
  align-items: center;
  justify-content: center;
  gap: 8px;
  height: 32px;
  padding: 0 12px;
  border: 1px solid #363b42;
  border-radius: 6px;
  background: #21262d;
  color: #c9d1d9;
  font-weight: 500;
  white-space: nowrap;
}
.btn.small { height: 28px; font-size: 12px; }
.btn.primary { background: #238636; border-color: #38924a; color: #fff; }
.btn.square { width: 32px; padding: 0; }

/* Settings layout */
.layout {
  display: grid;
  grid-template-columns: 312px minmax(0, 1fr);
  gap: 16px;
  max-width: 1113px;
  margin-left: auto;
  padding: 24px 17px 9px 0;
}
.sidebar h2 { padding: 16px 16px 6px; font-size: 12px; line-height: 18px; font-weight: 600; color: var(--muted); }
.sidebar section { margin-top: 7px; border-top: 1px solid var(--border-muted); }
.sidebar section.last { padding-bottom: 7px; border-bottom: 1px solid var(--border-muted); }
.sidebar a, .sidebar button {
  display: flex;
  align-items: center;
  gap: 8px;
  width: 100%;
  height: 32px;
  padding: 0 16px;
  border: 0;
  background: none;
  text-align: left;
}
.sidebar .icon { color: var(--muted); }
.grow { flex: 1; }
.open { position: relative; }
.open > button { font-weight: 600; }
.sub { font-size: 12px; }
.sub li { position: relative; padding: 0 8px; }
.sub a { padding: 0 32px; border-radius: 6px; }
.selected a { background: #1c2024; }
.selected::before {
  content: "";
  position: absolute;
  left: 0;
  top: 4px;
  width: 4px;
  height: 24px;
  border-radius: 6px;
  background: var(--link);
}

main { display: flex; flex-direction: column; }
.heading {
  margin-bottom: 16px;
  padding-bottom: 6px;
  border-bottom: 1px solid var(--border-muted);
  font-size: 24px;
  line-height: 38px;
  font-weight: 400;
}
main p { margin-bottom: 10px; }
main p a { color: var(--link); }

.tabnav {
  display: flex;
  height: 40px;
  margin: 16px 0 40px;
  border-bottom: 1px solid var(--border);
}
.tab {
  height: 40px;
  padding: 9px 16px;
  border: 1px solid transparent;
  border-bottom: 0;
  border-radius: 6px 6px 0 0;
  color: var(--muted);
}
.tab.on { background: var(--bg); border-color: var(--border); color: var(--fg); }
.action { position: relative; margin-left: auto; }

.box { position: relative; border: 1px solid var(--border); border-radius: 6px; }
.box + .box { margin-top: 40px; }
.boxhead {
  display: flex;
  align-items: center;
  justify-content: space-between;
  min-height: 54px;
  padding: 0 16px;
  border-bottom: 1px solid var(--border-muted);
  border-radius: 5px 5px 0 0;
  background: var(--subtle);
}
.boxhead.tall { min-height: 61px; border-color: var(--border); }
.boxhead h3 { font-size: 14px; font-weight: 600; }
.blank { padding: 24px 16px; text-align: center; color: var(--muted); }

.secrets li {
  display: flex;
  align-items: center;
  padding: 16px 20px 15px 16px;
  border-bottom: 1px solid var(--border-muted);
}
.secrets li:last-child { border-color: transparent; }
.secrets code { margin-left: 16px; padding-top: 2px; font: 14px/21px "Liberation Mono", monospace; }
.when { margin: 0 24px 0 auto; color: var(--muted); }
.square + .square { margin-left: 4px; }

/* Annotations laid over the page */
.marked::after {
  content: "";
  position: absolute;
  inset: -8px -7px -6px;
  border: 3px solid #f00;
  box-shadow: 2px 2px 4px #3a3d3b, inset 2px 2px 4px #3a3d3b;
  pointer-events: none;
}
.callout {
  position: absolute;
  z-index: 1;
  overflow: visible;
  fill: #f00;
  filter: drop-shadow(2px 3px 2px #44484a);
  pointer-events: none;
}
.callout text { fill: #fff; font: 700 27px "Noto Sans", sans-serif; text-anchor: middle; }
.one { width: 80px; height: 68px; left: 89px; top: -47px; }
.two { width: 88px; height: 64px; left: -76px; top: -16px; }
.three { width: 96px; height: 64px; right: 170px; top: -28px; }
```
